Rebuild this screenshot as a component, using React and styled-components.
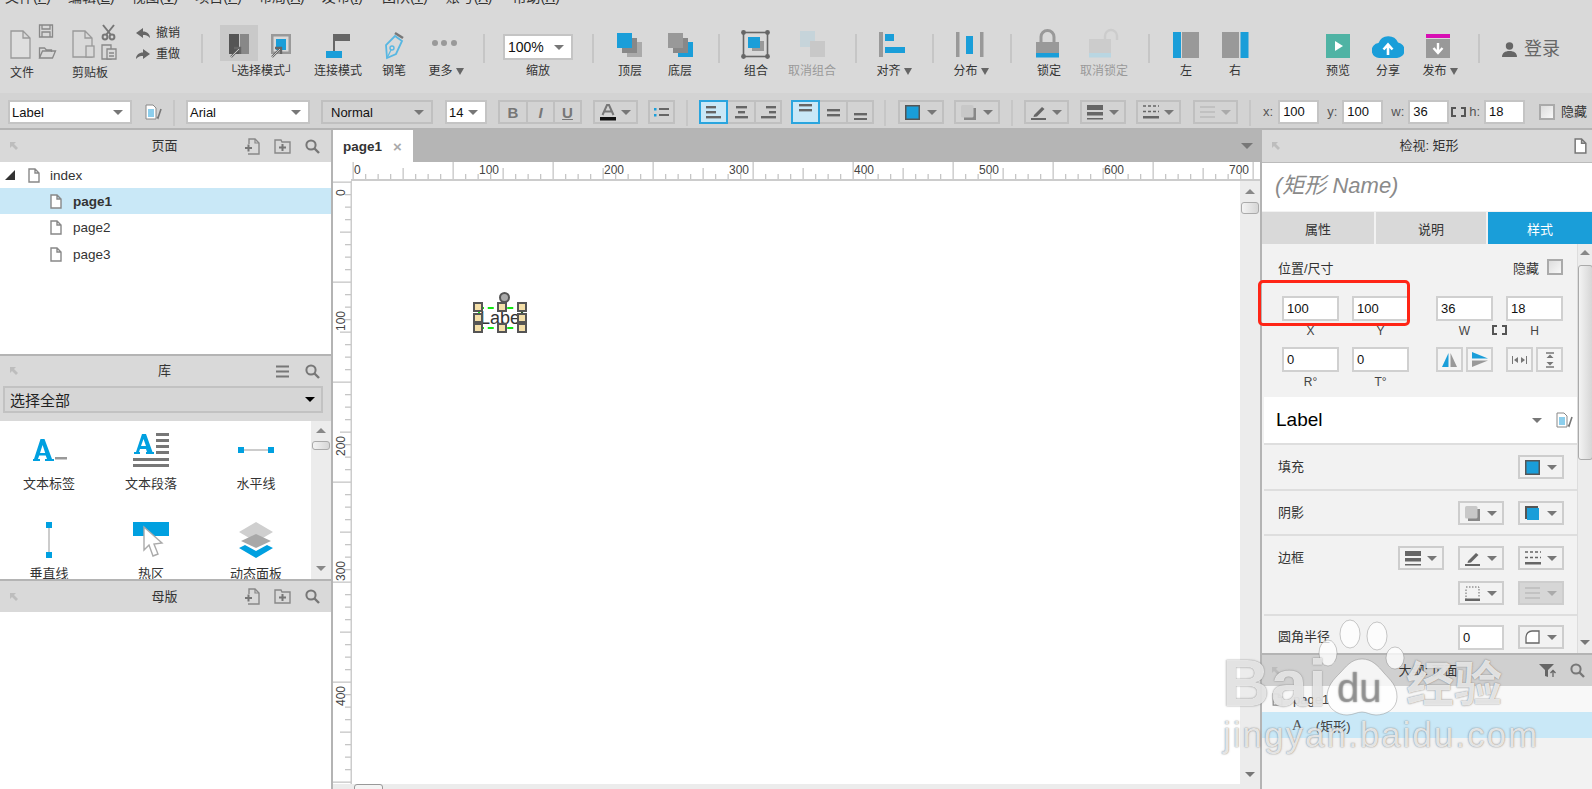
import React from 'react';
import styled, { createGlobalStyle, css } from 'styled-components';

const BLUE = '#1a9ed9';
const FONT = '"Liberation Sans","Noto Sans CJK SC",sans-serif';

const Global = createGlobalStyle`
  html, body { margin: 0; padding: 0; width: 1592px; height: 789px; overflow: hidden; background: #fff; }
  body { font-family: ${FONT}; color: #333; }
  * { box-sizing: border-box; }
  svg { display: block; flex: none; }
`;
const ml = css`margin-left: ${p => p.$ml || 0}px;`;

const Page = styled.div`width:1592px;height:789px;display:flex;flex-direction:column;position:relative;overflow:hidden;`;

/* menu */
const MenuBar = styled.div`height:6px;background:#d9d9d9;overflow:hidden;flex:none;`;
const MenuRow = styled.div`display:flex;margin-top:-12px;font-size:14px;line-height:19px;color:#333;`;
const MenuItem = styled.span`${ml};flex:none;white-space:nowrap;u{text-decoration:underline;}`;

/* toolbar */
const Toolbar = styled.div`height:87px;flex:none;background:#d9d9d9;display:flex;align-items:flex-start;`;
const Sep = styled.div`${ml};flex:none;width:2px;height:${p => p.$h || 29}px;margin-top:${p => p.$t ?? 28}px;background:#c6c6c6;`;
const ToolCol = styled.div`${ml};flex:none;width:${p => p.$w}px;display:flex;flex-direction:column;align-items:center;margin-top:22px;`;
const ToolLabel = styled.div`height:14px;line-height:14px;margin-top:4px;font-size:12px;white-space:nowrap;color:${p => p.$dim ? '#999' : '#333'};display:flex;align-items:center;gap:3px;`;
const Caret = styled.span`width:0;height:0;border-left:4px solid transparent;border-right:4px solid transparent;border-top:7px solid #666;`;
const FileGroup = styled.div`flex:none;width:${p => p.$w}px;padding-left:${p => p.$pl}px;margin-top:18px;`;
const FileLabel = styled.div`font-size:12px;line-height:14px;height:14px;margin-top:6px;color:#333;`;
const UndoGroup = styled.div`flex:none;width:69px;padding:20px 0 0 4px;display:flex;flex-direction:column;gap:7px;`;
const UndoRow = styled.div`display:flex;align-items:center;gap:6px;height:14px;font-size:12px;line-height:14px;color:#333;`;
const SelectGroup = styled.div`flex:none;width:113px;margin-top:19px;display:flex;flex-direction:column;`;
const SelectCells = styled.div`display:flex;padding-left:17px;`;
const SelectCell = styled.div`width:${p => p.$w}px;height:36px;padding-top:9px;display:flex;justify-content:center;background:${p => p.$on ? '#c9c9c9' : 'transparent'};`;
const SelectLabel = styled.div`height:14px;line-height:14px;margin-top:3px;padding-left:3px;font-size:12px;text-align:center;white-space:nowrap;color:#333;`;
const ZoomBlock = styled.div`${ml};flex:none;width:70px;margin-top:28px;display:flex;flex-direction:column;`;
const ZoomLabel = styled.div`height:14px;line-height:14px;margin-top:4px;font-size:12px;text-align:center;color:#333;`;
const Login = styled.div`${ml};flex:none;margin-top:31px;display:flex;align-items:center;gap:7px;font-size:18px;line-height:24px;color:#666;`;

/* format bar */
const FormatBar = styled.div`height:37px;flex:none;background:#d3d3d3;border-bottom:2px solid #b4b4b4;display:flex;align-items:flex-start;padding-top:7px;`;
const Select = styled.div`${ml};flex:none;width:${p => p.$w}px;height:${p => p.$h || 24}px;background:${p => p.$flat ? 'transparent' : '#fff'};border:2px solid ${p => p.$flat ? '#c0c0c0' : '#c4c4c4'};display:flex;align-items:center;justify-content:space-between;padding:0 7px 0 ${p => p.$pl ?? 2}px;font-size:${p => p.$fs || 13}px;color:#111;`;
const Arrow = styled.span`flex:none;width:0;height:0;border-left:${p => p.$s || 5}px solid transparent;border-right:${p => p.$s || 5}px solid transparent;border-top:${p => (p.$s || 5)}px solid ${p => p.$c || '#777'};`;
const IconWrap = styled.div`${ml};flex:none;height:24px;display:flex;align-items:center;`;
const BtnGroup = styled.div`${ml};flex:none;display:flex;`;
const SquareBtn = styled.div`flex:none;width:${p => p.$w}px;height:24px;margin-left:${p => p.$first ? 0 : -2}px;border:2px solid ${p => p.$on ? '#2aa5de' : '#c0c0c0'};background:${p => p.$on ? '#c9e8f7' : 'transparent'};position:relative;z-index:${p => p.$on ? 1 : 0};display:flex;align-items:center;justify-content:center;color:#777;font-size:15px;font-weight:${p => p.$b ? 700 : 400};font-style:${p => p.$i ? 'italic' : 'normal'};text-decoration:${p => p.$u ? 'underline' : 'none'};`;
const DropBtn = styled.div`${ml};flex:none;width:${p => p.$w || 46}px;height:24px;border:2px solid ${p => p.$light ? '#cdcdcd' : '#c0c0c0'};background:${p => p.$off ? '#d6d6d6' : 'transparent'};display:flex;align-items:center;justify-content:space-between;padding:0 5px;`;
const FieldLabel = styled.span`${ml};flex:none;font-size:13px;line-height:24px;color:#555;`;
const TinyInput = styled.div`${ml};flex:none;width:41px;height:24px;border:2px solid #c4c4c4;background:#fff;font-size:13px;line-height:20px;padding-left:3px;color:#111;`;
const Check = styled.span`${ml};flex:none;width:16px;height:16px;border:2px solid #aaa;background:linear-gradient(135deg,#ddd,#f8f8f8);`;
const HideText = styled.span`${ml};flex:none;font-size:13px;line-height:24px;color:#333;`;

/* main */
const Main = styled.div`flex:1;min-height:0;display:flex;`;
const Left = styled.aside`flex:none;width:333px;border-right:2px solid #b4b4b4;display:flex;flex-direction:column;background:#fff;`;
const PanelHead = styled.div`flex:none;height:${p => p.$h || 32}px;background:${p => p.$bg || '#d9d9d9'};${p => p.$top && 'border-top:2px solid #b4b4b4;'}display:grid;grid-template-columns:1fr auto 1fr;align-items:center;padding:0 ${p => p.$pr ?? 11}px 0 9px;`;
const HeadTitle = styled.div`font-size:13px;line-height:16px;color:#333;white-space:nowrap;`;
const HeadIcons = styled.div`display:flex;justify-content:flex-end;align-items:center;gap:${p => p.$g ?? 14}px;`;
const Tree = styled.div`height:192px;flex:none;`;
const TreeRow = styled.div`height:${p => p.$h || 26}px;display:flex;align-items:center;background:${p => p.$on ? '#c9e8f7' : 'transparent'};padding-left:${p => p.$pl}px;gap:${p => p.$g || 11}px;font-size:13.5px;font-weight:${p => p.$on ? 700 : 400};color:#333;`;
const Triangle = styled.span`width:0;height:0;border-left:10px solid transparent;border-bottom:10px solid #333;margin-right:3px;`;
const LibBar = styled.div`flex:none;height:35px;background:#d9d9d9;padding:0 8px 8px 3px;`;
const LibSelect = styled.div`height:27px;border:2px solid #c2c2c2;background:#d6d6d6;display:flex;align-items:center;justify-content:space-between;padding:0 6px 0 5px;font-size:15px;color:#222;`;
const LibBody = styled.div`height:158px;flex:none;display:flex;overflow:hidden;`;
const LibGrid = styled.div`flex:1;display:grid;grid-template-columns:98px 106px 104px;grid-auto-rows:90px;padding-top:11px;`;
const LibItem = styled.div`display:flex;flex-direction:column;align-items:center;`;
const LibIcon = styled.div`height:36px;display:flex;align-items:center;justify-content:center;`;
const LibText = styled.div`margin-top:8px;font-size:13px;line-height:16px;color:#333;white-space:nowrap;`;
const VScroll = styled.div`flex:none;width:${p => p.$w}px;background:#ececec;display:flex;flex-direction:column;align-items:center;padding:${p => p.$pt || 7}px 0 ${p => p.$pb || 8}px;border-left:${p => p.$bl ? '1px solid #ddd' : 'none'};`;
const UpArrow = styled.span`flex:none;width:0;height:0;border-left:5px solid transparent;border-right:5px solid transparent;border-bottom:5px solid #888;`;
const Thumb = styled.div`flex:none;width:${p => p.$w}px;height:${p => p.$h}px;margin-top:${p => p.$t}px;border:1px solid #aaa;border-radius:3px;background:linear-gradient(90deg,#f3f3f3,#d6d6d6);`;
const Spacer = styled.div`flex:1;`;

const Center = styled.section`flex:none;width:927px;display:flex;flex-direction:column;`;
const TabBar = styled.div`flex:none;height:32px;background:#b5b5b5;display:flex;justify-content:space-between;align-items:center;padding-right:7px;`;
const Tab = styled.div`width:80px;height:32px;background:#fff;display:flex;align-items:center;padding-left:10px;gap:11px;font-size:13.5px;font-weight:700;color:#333;`;
const CloseX = styled.span`font-size:15px;color:#aaa;font-weight:700;`;
const RulerTop = styled.div`flex:none;height:19px;display:flex;background:#fff;`;
const RulerCorner = styled.div`flex:none;width:18px;`;
const Work = styled.div`flex:1;min-height:0;display:flex;`;
const WorkMain = styled.div`flex:1;min-width:0;display:flex;flex-direction:column;`;
const WorkBody = styled.div`flex:1;min-height:0;display:flex;`;
const Canvas = styled.div`flex:1;position:relative;background:#fff;overflow:hidden;`;
const HScroll = styled.div`flex:none;height:5px;background:#ececec;overflow:hidden;padding-left:21px;`;
const HThumb = styled.div`width:29px;height:12px;border:1px solid #999;border-radius:3px;background:#f4f4f4;`;
const Selected = styled.div`position:absolute;left:126px;top:126px;width:45px;height:22px;border:2px dashed #12e812;font-size:18px;line-height:18px;text-align:center;color:#333;white-space:nowrap;`;
const Handle = styled.span`position:absolute;width:10px;height:10px;left:${p => p.$x}px;top:${p => p.$y}px;background:#f4dfa8;border:2px solid #555;`;
const RotHandle = styled.span`position:absolute;left:147px;top:111px;width:11px;height:11px;border-radius:50%;background:#aaa;border:2px solid #555;`;

/* right */
const Right = styled.aside`flex:1;min-width:0;display:flex;flex-direction:column;background:#f2f2f2;border-left:2px solid #b4b4b4;`;
const NameBox = styled.div`flex:none;height:49px;background:#fff;border-top:1px solid #bbb;padding-left:13px;font-size:22px;line-height:46px;font-style:italic;color:#8a8a8a;`;
const Tabs = styled.div`flex:none;height:33px;display:flex;gap:2px;background:#f2f2f2;padding-top:1px;`;
const TabBtn = styled.div`flex:${p => p.$w ? `none` : 1};width:${p => p.$w}px;background:${p => p.$on ? BLUE : '#d9d9d9'};color:${p => p.$on ? '#fff' : '#333'};display:flex;align-items:center;justify-content:center;font-size:13px;`;
const StyleArea = styled.div`flex:none;height:409px;display:flex;overflow:hidden;`;
const StyleBody = styled.div`flex:1;min-width:0;display:flex;flex-direction:column;`;
const PosHead = styled.div`display:flex;align-items:center;justify-content:space-between;padding:15px 14px 0 16px;height:31px;font-size:13px;color:#333;`;
const HideBox = styled.div`display:flex;align-items:center;gap:8px;`;
const PosGrid = styled.div`display:grid;grid-template-columns:57px 13px 57px 27px 57px 13px 57px;grid-template-rows:25px 26px 25px 22px;margin:21px 0 0 20px;`;
const PInput = styled.div`border:2px solid #d0d0d0;background:#fff;font-size:13px;line-height:21px;padding-left:3px;color:#111;`;
const PLabel = styled.div`font-size:12px;text-align:center;line-height:18px;padding-top:1px;color:#444;`;
const PGlyph = styled.div`display:flex;justify-content:center;padding-top:4px;width:13px;`;
const BtnPair = styled.div`display:flex;justify-content:space-between;`;
const IconBtn = styled.div`width:27px;height:25px;border:2px solid #d0d0d0;background:#f4f4f4;display:flex;align-items:center;justify-content:center;`;
const LabelRow = styled.div`flex:none;height:48px;margin:3px 0 0 2px;background:#fff;border-bottom:2px solid #dedede;display:flex;align-items:center;padding:0 4px 0 12px;font-size:19px;color:#000;`;
const LabelRight = styled.div`margin-left:auto;display:flex;align-items:center;gap:14px;`;
const PropRow = styled.div`flex:none;height:${p => p.$h}px;margin-left:2px;border-bottom:${p => p.$nb ? 'none' : '2px solid #dedede'};display:flex;padding:${p => p.$pt || 10}px 13px 0 14px;font-size:13px;color:#333;`;
const PropName = styled.div`line-height:24px;flex:none;`;
const PropCtl = styled.div`margin-left:auto;display:flex;flex-direction:column;align-items:flex-end;gap:11px;`;
const CtlRow = styled.div`display:flex;gap:14px;`;
const RadiusInput = styled.div`flex:none;width:46px;height:25px;border:2px solid #d0d0d0;background:#fff;font-size:13px;line-height:21px;padding-left:3px;color:#111;`;
const Outline = styled.div`flex:1;min-height:0;display:flex;flex-direction:column;`;
const OutRow = styled.div`flex:none;height:26px;display:flex;align-items:center;background:${p => p.$on ? '#c9e8f7' : '#f8f8f8'};padding-left:${p => p.$pl}px;gap:${p => p.$g}px;font-size:13px;color:#444;`;
const ASerif = styled.span`font-family:"Liberation Serif",serif;font-size:15px;color:#555;`;

/* overlays */
const RedBox = styled.div`position:absolute;left:1258px;top:280px;width:152px;height:46px;border:3px solid #ff2516;border-radius:5px;pointer-events:none;`;
const Mark = styled.div`position:absolute;left:0;top:0;width:1592px;height:789px;pointer-events:none;`;
const MarkText = styled.div`position:absolute;left:${p => p.$x}px;top:${p => p.$y}px;font-size:${p => p.$s}px;line-height:1;letter-spacing:${p => p.$ls || 0}px;font-weight:${p => p.$b ? 700 : 400};color:${p => p.$c || 'rgba(255,255,255,.78)'};text-shadow:0 0 1px rgba(90,90,90,.6),0 0 2px rgba(110,110,110,.5);white-space:nowrap;`;
const MarkSvg = styled.svg`position:absolute;left:1310px;top:615px;`;

/* ---------- drawings ---------- */
const Doc = ({ w = 12, h = 15, c = '#888', fill = '#fff' }) => (
  <svg width={w} height={h} viewBox="0 0 12 15"><path d="M1 1h6l4 4v9H1zM7 1v4h4" fill={fill} stroke={c} strokeWidth="1.4" /></svg>
);
const Cursor = ({ x, y }) => (
  <g transform={`translate(${x} ${y})`}><path d="M0 11L8 3M3 2h6v6" fill="none" stroke="#666" strokeWidth="2.4" /><path d="M0 11L8 3" stroke="#ddd" strokeWidth=".8" /></g>
);
const Up = () => <svg width="10" height="10" viewBox="0 0 10 10"><path d="M1 1h6L5 3l4 4-2 2-4-4-2 2z" fill="#bdbdbd" /></svg>;
const Search = () => <svg width="15" height="15" viewBox="0 0 15 15"><circle cx="6" cy="6" r="4.6" fill="none" stroke="#777" strokeWidth="2" /><path d="M9.5 9.5L14 14" stroke="#777" strokeWidth="2.4" /></svg>;
const AddPage = () => <svg width="15" height="17" viewBox="0 0 15 17"><path d="M4 6V1h6l4 4v11H3" fill="none" stroke="#888" strokeWidth="1.4" /><path d="M10 1v4h4" fill="none" stroke="#888" strokeWidth="1.2" /><path d="M0 10h7M3.5 6.5v7" stroke="#777" strokeWidth="2" /></svg>;
const AddFolder = () => <svg width="17" height="15" viewBox="0 0 17 15"><path d="M1 14V1h6l1 2h8v11z" fill="none" stroke="#888" strokeWidth="1.4" /><path d="M5 8.5h7M8.5 5v7" stroke="#777" strokeWidth="2" /></svg>;
const Lines = () => <svg width="13" height="13" viewBox="0 0 13 13"><path d="M0 1.5h13M0 6.5h13M0 11.5h13" stroke="#777" strokeWidth="2.2" /></svg>;
const SlotSvg = ({ children }) => <svg width="32" height="32" viewBox="0 0 32 32">{children}</svg>;
const StyleDoc = () => (
  <svg width="17" height="16" viewBox="0 0 17 16"><path d="M1 1h7l3 3v11H1z" fill="#fff" stroke="#888" /><path d="M3 6h6M3 8h6M3 10h6M3 12h6" stroke={BLUE} strokeWidth="1.2" /><path d="M16 5l-3 9-1-1" fill="none" stroke="#777" strokeWidth="1.6" /></svg>
);
const FileIcons = () => (
  <svg width="50" height="36" viewBox="0 0 50 36" fill="none" stroke="#999" strokeWidth="1.3">
    <path d="M1 7h12l7 7v20H1zM13 7v7h7" fill="#dedede" />
    <path d="M29.5 1h13v12h-13z" stroke="#888" /><path d="M32 1v4h8V1M32 13V8h8v5" stroke="#888" />
    <path d="M29.5 34V24h5l2 2h5v2M29.5 34l3-7h13l-3 7z" stroke="#888" />
  </svg>
);
const ClipIcons = () => (
  <svg width="46" height="36" viewBox="0 0 46 36" fill="none" stroke="#999" strokeWidth="1.3">
    <path d="M1 7h12l7 7v19H1zM13 7v7h7" />
    <rect x="14" y="22" width="8" height="11" fill="#d9d9d9" />
    <g stroke="#777" strokeWidth="2"><path d="M31 1l8 10M42 1l-8 10" /><circle cx="33" cy="13" r="2.4" /><circle cx="40" cy="13" r="2.4" /></g>
    <path d="M30 21h9v14h-9z" stroke="#888" /><path d="M35 25h9v10H35z" fill="#d9d9d9" stroke="#888" /><path d="M37 29h5M37 32h5" stroke="#888" />
  </svg>
);
const UndoI = ({ flip }) => (
  <svg width="14" height="11" viewBox="0 0 14 11"><g transform={flip ? 'translate(14 0) scale(-1 1)' : undefined}><path d="M7 0L0 5l7 5V7c2.500 0 5 .5 7 3 0-4-3-6.500-7-6.500z" fill="#666" /></g></svg>
);
const ModeA = () => <svg width="20" height="24" viewBox="0 0 20 24"><rect width="10" height="20" fill="#555" /><rect x="11" width="9" height="20" fill="#888" /><Cursor x={2} y={12} /></svg>;
const ModeB = () => <svg width="20" height="24" viewBox="0 0 20 24"><rect width="20" height="20" fill="#999" /><rect x="2.500" y="2.500" width="15" height="15" fill="#d9d9d9" /><rect x="5" y="5" width="10" height="11" fill={BLUE} /><Cursor x={1} y={12} /></svg>;
const Connect = () => <SlotSvg><rect x="11" y="6" width="17" height="7" fill="#666" /><path d="M12 10v13" stroke="#666" strokeWidth="2" /><rect x="4" y="23" width="16" height="7" fill={BLUE} /></SlotSvg>;
const Pen = () => <SlotSvg><g fill="none"><path d="M9 30L8 17l9-9 7 5-6 13z" stroke="#58b7e2" strokeWidth="1.8" /><circle cx="14" cy="20" r="2" stroke="#58b7e2" strokeWidth="1.4" /><path d="M9 30l4-8" stroke="#58b7e2" strokeWidth="1.3" /><path d="M17 5l8 5" stroke="#777" strokeWidth="2.6" /></g></SlotSvg>;
const More = () => <SlotSvg><g fill="#999"><circle cx="5" cy="15" r="3" /><circle cx="14" cy="15" r="3" /><circle cx="24" cy="15" r="3" /></g></SlotSvg>;
const TopLayer = () => <SlotSvg><rect x="13" y="14" width="15" height="15" fill="#aaa" /><rect x="8" y="10" width="15" height="15" fill="#888" /><rect x="3" y="5" width="15" height="15" fill={BLUE} /></SlotSvg>;
const BottomLayer = () => <SlotSvg><rect x="14" y="14" width="15" height="15" fill={BLUE} /><rect x="9" y="10" width="15" height="15" fill="#888" /><rect x="4" y="5" width="15" height="15" fill="#999" /></SlotSvg>;
const GroupI = () => <SlotSvg><rect x="3.500" y="4.500" width="24" height="24" fill="none" stroke="#666" strokeWidth="1.6" /><rect x="12" y="13" width="12" height="10" fill="#999" /><rect x="8" y="9" width="12" height="11" fill={BLUE} /><g fill="#666"><circle cx="3.500" cy="4.500" r="2.400" /><circle cx="27.500" cy="4.500" r="2.400" /><circle cx="3.500" cy="28.500" r="2.400" /><circle cx="27.500" cy="28.500" r="2.400" /></g></SlotSvg>;
const Ungroup = () => <SlotSvg><rect x="4" y="3" width="15" height="16" fill="#c6d4da" /><rect x="14" y="13" width="15" height="16" fill="#c8c8c8" /></SlotSvg>;
const AlignI = () => <SlotSvg><rect x="1" y="4" width="4" height="25" fill="#999" /><rect x="7" y="6" width="9" height="7" fill={BLUE} /><rect x="7" y="19" width="20" height="6" fill={BLUE} /></SlotSvg>;
const Distribute = () => <SlotSvg><rect x="1" y="4" width="3.500" height="25" fill="#999" /><rect x="25" y="4" width="3.500" height="25" fill="#999" /><rect x="11" y="8" width="7" height="18" fill={BLUE} /></SlotSvg>;
const Lock = () => <SlotSvg><path d="M8 14V9a6.500 6.500 0 0 1 13 0v5" fill="none" stroke="#999" strokeWidth="3" /><rect x="3" y="14" width="23" height="11" fill="#999" /><rect x="3" y="25" width="23" height="4.500" fill={BLUE} /></SlotSvg>;
const Unlock = () => <SlotSvg><path d="M17 11V8a6 6 0 0 1 12 0v4" fill="none" stroke="#ccc" strokeWidth="2.400" /><rect x="1" y="11" width="22" height="14" fill="#ccc" /><rect x="1" y="25" width="22" height="4.500" fill="#b9d6e2" /></SlotSvg>;
const LeftI = () => <SlotSvg><rect x="3" y="4" width="8" height="26" fill={BLUE} /><rect x="12" y="4" width="17" height="26" fill="#999" /></SlotSvg>;
const RightI = () => <SlotSvg><rect x="3" y="4" width="17" height="26" fill="#999" /><rect x="21.500" y="4" width="8" height="26" fill={BLUE} /></SlotSvg>;
const Preview = () => <SlotSvg><rect x="4" y="6" width="24" height="24" fill="#4fb3a4" /><path d="M13 13l8 5-8 5z" fill="#fff" /></SlotSvg>;
const Share = () => <SlotSvg><path d="M8 30a7.500 7.500 0 0 1-1.500-15A10.500 10.500 0 0 1 26 14.500 7.800 7.800 0 0 1 25 30z" fill={BLUE} /><path d="M16 27v-9M11.500 21.500l4.500-5 4.500 5" fill="none" stroke="#fff" strokeWidth="2.600" /></SlotSvg>;
const Publish = () => <SlotSvg><rect x="2" y="6" width="24" height="4" fill="#d80fb4" /><rect x="2" y="11" width="24" height="19" fill="#999" /><path d="M14 15v9M9.500 20l4.500 5 4.500-5" fill="none" stroke="#fff" strokeWidth="2.400" /></SlotSvg>;
const User = () => <svg width="15" height="15" viewBox="0 0 15 15"><circle cx="7.500" cy="4" r="3.700" fill="#666" /><path d="M0 15c0-4 3-6 7.500-6s7.500 2 7.500 6z" fill="#666" /></svg>;

const AlignText = ({ k }) => {
  const rows = k === 0 ? [[0, 10], [0, 10], [0, 15]] : k === 1 ? [[2, 11], [4, 7], [1, 13]] : [[5, 10], [8, 7], [0, 15]];
  return <svg width="15" height="13" viewBox="0 0 15 13">{rows.map((r, i) => <rect key={i} x={r[0]} y={i * 5} width={r[1]} height="2.400" fill="#666" />)}</svg>;
};
const VAlign = ({ k }) => {
  const y = k === 0 ? 0 : k === 1 ? 5 : 9;
  return <svg width="13" height="16" viewBox="0 0 13 16"><rect y={y} width="13" height="2.400" fill="#666" /><rect y={y + 5} width="13" height="2.400" fill="#666" /></svg>;
};
const ListI = () => <svg width="15" height="10" viewBox="0 0 15 10"><rect y="1" width="2.500" height="2.500" fill={BLUE} /><rect y="7" width="2.500" height="2.500" fill={BLUE} /><rect x="5" y="1" width="10" height="2" fill="#666" /><rect x="5" y="7" width="10" height="2" fill="#666" /></svg>;
const ColorA = () => <svg width="16" height="17" viewBox="0 0 16 17"><path d="M2.500 11L7 1h2l4.500 10M4.500 7.500h7" fill="none" stroke="#777" strokeWidth="2" /><rect y="13" width="16" height="3.500" fill="#111" /></svg>;
const Fill = () => <svg width="15" height="15" viewBox="0 0 15 15"><rect x=".75" y=".75" width="13.500" height="13.500" fill={BLUE} stroke="#555" strokeWidth="1.500" /></svg>;
const Shadow = () => <svg width="15" height="15" viewBox="0 0 15 15"><rect x="3" y="3" width="12" height="12" fill="#888" /><rect width="12.500" height="12.500" rx="1.500" fill="#c8c8c8" /></svg>;
const ShadowFill = () => <svg width="14" height="14" viewBox="0 0 14 14"><rect width="13" height="13" fill="#555" /><rect x="2" y="2" width="12" height="12" fill={BLUE} /></svg>;
const PenLine = () => <svg width="16" height="15" viewBox="0 0 16 15"><path d="M3 10L11 2l2.500 2L6 11.500 2.500 12z" fill="#666" /><rect y="13" width="15" height="2" fill="#666" /></svg>;
const Thick = () => <svg width="16" height="15" viewBox="0 0 16 15"><rect width="16" height="5" fill="#666" /><rect y="7" width="16" height="3.500" fill="#666" /><rect y="13" width="16" height="1.500" fill="#666" /></svg>;
const Dash = () => <svg width="16" height="14" viewBox="0 0 16 14"><path d="M0 1h16M0 6.500h16" stroke="#666" strokeWidth="1.600" strokeDasharray="3 2" /><rect y="11" width="16" height="2.500" fill="#666" /></svg>;
const ArrowsI = () => <svg width="15" height="14" viewBox="0 0 15 14"><path d="M0 2h15M0 7h15M0 12h15" stroke="#bcbcbc" strokeWidth="1.300" /></svg>;
const Corner = () => <svg width="15" height="15" viewBox="0 0 15 15"><path d="M1 14V3" stroke="#666" strokeDasharray="1.500 1.500" /><path d="M1 1h13v10" fill="none" stroke="#666" strokeDasharray="1.500 1.500" /><rect y="12.500" width="15" height="2.500" fill="#666" /></svg>;
const RadiusI = () => <svg width="15" height="14" viewBox="0 0 15 14"><path d="M1 13V7a6 6 0 0 1 6-6h7v12z" fill="#fff" stroke="#666" strokeWidth="1.300" /></svg>;
const Bracket = () => <svg width="15" height="10" viewBox="0 0 15 10" fill="none" stroke="#555" strokeWidth="2"><path d="M5 1H1v8h4M10 1h4v8h-4" /></svg>;
const FlipV = () => <svg width="15" height="16" viewBox="0 0 15 16"><path d="M6.500 1v14H0z" fill={BLUE} /><path d="M8.500 1v14H15z" fill="#999" /></svg>;
const FlipH = () => <svg width="16" height="15" viewBox="0 0 16 15"><path d="M0 0l16 6.500H0z" fill={BLUE} /><path d="M0 15l16-6.500H0z" fill="#999" /></svg>;
const DistH = () => <svg width="15" height="8" viewBox="0 0 15 8"><path d="M.5 0v8M14.500 0v8" stroke="#777" /><path d="M2 4l4-3v6zM13 4L9 1v6z" fill="#777" /></svg>;
const DistV = () => <svg width="10" height="16" viewBox="0 0 10 16"><path d="M1 1h8M1 15h8" stroke="#777" strokeWidth="1.300" /><path d="M5 2.500L1.500 6h7zM5 13.500L1.500 10h7z" fill="#777" /></svg>;
const Filter = () => <svg width="17" height="14" viewBox="0 0 17 14"><path d="M0 0h15l-6 6v7l-3-1V6z" fill="#666" /><path d="M14 13V7M11.500 9L14 6.500 16.500 9" fill="none" stroke="#666" strokeWidth="1.300" /></svg>;

const LibLabelI = () => <svg width="36" height="24" viewBox="0 0 36 24"><path d="M2 23h7v-2H7l1.200-3.500h6.500L16 21h-2v2h9v-2h-2L13.500 1h-4L3 21H2zM9 15l2.600-8 2.600 8z" fill="#00a0e0" /><rect x="24" y="19" width="12" height="2.500" fill="#999" /></svg>;
const LibParaI = () => <svg width="36" height="34" viewBox="0 0 36 34"><path d="M1 21h6v-2H6l1-3h6l1 3h-1v2h8v-2h-1.500L13 1H9L3 19H1zM8 13l2.500-7L13 13z" fill="#00a0e0" /><g fill="#777"><rect x="23" y="0" width="13" height="3" /><rect x="23" y="6" width="13" height="3" /><rect x="23" y="12" width="13" height="3" /><rect x="23" y="18" width="13" height="3" /><rect y="25" width="36" height="3" /><rect y="31" width="36" height="3" /></g></svg>;
const LibHLine = () => <svg width="36" height="8" viewBox="0 0 36 8"><path d="M4 4h28" stroke="#bbb" strokeWidth="1.500" /><rect y="1" width="6" height="6" fill="#00a0e0" /><rect x="30" y="1" width="6" height="6" fill="#00a0e0" /></svg>;
const LibVLine = () => <svg width="8" height="36" viewBox="0 0 8 36"><path d="M4 4v28" stroke="#bbb" strokeWidth="1.500" /><rect x="1" width="6" height="6" fill="#00a0e0" /><rect x="1" y="30" width="6" height="6" fill="#00a0e0" /></svg>;
const LibHot = () => <svg width="36" height="36" viewBox="0 0 36 36"><rect width="36" height="14" fill="#00a0e0" /><path d="M11 5v23l5-5 4 11 5-2-4-10 8-1z" fill="#fff" stroke="#aaa" strokeWidth="1.400" /></svg>;
const LibLayer = () => <svg width="36" height="36" viewBox="0 0 36 36"><path d="M18 0l17 10-17 10L1 10z" fill="#cfcfcf" /><path d="M18 12l15 7-15 7-15-7z" fill="#a8a8a8" /><path d="M7 23l11 6 11-6 6 3-17 10L1 26z" fill="#00a0e0" /></svg>;

/* rulers */
const rulerTicks = (n) => Array.from({ length: n }, (_, i) => i);
const HRuler = () => (
  <svg width="909" height="19" viewBox="0 0 909 19">
    <rect y="17" width="909" height="2" fill="#ccc" />
    {rulerTicks(73).map(i => {
      const x = 1.5 + i * 12.5;
      const h = i % 8 === 0 ? 17 : i % 4 === 0 ? 11 : 5;
      return <rect key={i} x={x} y={17 - h} width="1.300" height={h} fill="#c6c6c6" />;
    })}
    {rulerTicks(8).map(i => <text key={i} x={3 + i * 125} y={12} fontSize="12" fontFamily="Liberation Sans" fill="#444">{i * 100}</text>)}
  </svg>
);
const VRuler = () => (
  <svg width="19" height="608" viewBox="0 0 19 608">
    <rect x="17.500" width="1.500" height="608" fill="#ccc" />
    {rulerTicks(49).map(i => {
      const y = 0.5 + i * 12.5;
      const h = i % 8 === 0 ? 18 : i % 4 === 0 ? 11 : 6;
      return <rect key={i} x={18 - h} y={y} width={h} height="1.300" fill="#c6c6c6" />;
    })}
    {rulerTicks(5).map(i => {
      const y = i === 0 ? 15 : 26 + i * 125 - 1;
      return <text key={i} transform={`translate(12 ${y}) rotate(-90)`} fontSize="12" fontFamily="Liberation Sans" fill="#444">{i * 100}</text>;
    })}
  </svg>
);

/* data */
const menus = [['文件(', 'F', 5], ['编辑(', 'E', 17], ['视图(', 'V', 17], ['项目(', 'P', 17], ['布局(', 'A', 16], ['发布(', 'I', 17], ['团队(', 'T', 19], ['账号(', 'A', 18], ['帮助(', 'H', 20]];
const Tool = ({ I, label, w, m, dim, caret }) => (
  <ToolCol $w={w} $ml={m}><I /><ToolLabel $dim={dim}>{label}{caret && <Caret />}</ToolLabel></ToolCol>
);
const libs = [[LibLabelI, '文本标签'], [LibParaI, '文本段落'], [LibHLine, '水平线'], [LibVLine, '垂直线'], [LibHot, '热区'], [LibLayer, '动态面板']];
const handles = [[-7, -7], [17, -7], [37, -7], [-7, 4], [37, 4], [17, 14], [-7, 14], [37, 14]];

export default function App() {
  return (
    <Page>
      <Global />
      <MenuBar>
        <MenuRow>
          {menus.map(m => <MenuItem key={m[0]} $ml={m[2]}>{m[0]}<u>{m[1]}</u>)</MenuItem>)}
        </MenuRow>
      </MenuBar>
      <Toolbar>
        <FileGroup $w={66} $pl={10}><FileIcons /><FileLabel>文件</FileLabel></FileGroup>
        <FileGroup $w={66} $pl={6}><ClipIcons /><FileLabel>剪贴板</FileLabel></FileGroup>
        <UndoGroup>
          <UndoRow><UndoI />撤销</UndoRow>
          <UndoRow><UndoI flip />重做</UndoRow>
        </UndoGroup>
        <Sep />
        <SelectGroup>
          <SelectCells>
            <SelectCell $w={38} $on><ModeA /></SelectCell>
            <SelectCell $w={45}><ModeB /></SelectCell>
          </SelectCells>
          <SelectLabel>└选择模式┘</SelectLabel>
        </SelectGroup>
        <Tool I={Connect} label="连接模式" w={44} />
        <Tool I={Pen} label="钢笔" w={44} m={12} />
        <Tool I={More} label="更多" w={44} m={8} caret />
        <Sep $ml={15} />
        <ZoomBlock $ml={18}>
          <Select $w={70} $h={26} $pl={3} $fs={14}>100%<Arrow /></Select>
          <ZoomLabel>缩放</ZoomLabel>
        </ZoomBlock>
        <Sep $ml={19} />
        <Tool I={TopLayer} label="顶层" w={48} m={12} />
        <Tool I={BottomLayer} label="底层" w={48} m={2} />
        <Sep $ml={14} />
        <Tool I={GroupI} label="组合" w={48} m={12} />
        <Tool I={Ungroup} label="取消组合" w={62} m={1} dim />
        <Sep $ml={12} />
        <Tool I={AlignI} label="对齐" w={48} m={13} caret />
        <Sep $ml={14} />
        <Tool I={Distribute} label="分布" w={48} m={13} caret />
        <Sep $ml={15} />
        <Tool I={Lock} label="锁定" w={48} m={13} />
        <Tool I={Unlock} label="取消锁定" w={62} dim />
        <Sep $ml={13} />
        <Tool I={LeftI} label="左" w={48} m={12} />
        <Tool I={RightI} label="右" w={48} m={1} />
        <Tool I={Preview} label="预览" w={48} m={55} />
        <Tool I={Share} label="分享" w={48} m={2} />
        <Tool I={Publish} label="发布" w={48} m={4} caret />
        <Sep $ml={14} />
        <Login $ml={22}><User />登录</Login>
      </Toolbar>
      <FormatBar>
        <Select $w={124} $ml={8}>Label<Arrow /></Select>
        <IconWrap $ml={13}><StyleDoc /></IconWrap>
        <Sep $ml={11} $h={26} $t={0} />
        <Select $w={124} $ml={11}>Arial<Arrow /></Select>
        <Select $w={112} $ml={11} $flat $pl={8}>Normal<Arrow /></Select>
        <Select $w={42} $ml={12}>14<Arrow /></Select>
        <BtnGroup $ml={11}>
          <SquareBtn $w={30} $first $b>B</SquareBtn>
          <SquareBtn $w={29} $i $b>I</SquareBtn>
          <SquareBtn $w={29} $u $b>U</SquareBtn>
        </BtnGroup>
        <DropBtn $w={45} $ml={11}><ColorA /><Arrow /></DropBtn>
        <BtnGroup $ml={10}><SquareBtn $w={27} $first><ListI /></SquareBtn></BtnGroup>
        <Sep $ml={11} $h={26} $t={0} />
        <BtnGroup $ml={11}>
          <SquareBtn $w={29} $first $on><AlignText k={0} /></SquareBtn>
          <SquareBtn $w={30}><AlignText k={1} /></SquareBtn>
          <SquareBtn $w={28}><AlignText k={2} /></SquareBtn>
        </BtnGroup>
        <BtnGroup $ml={9}>
          <SquareBtn $w={29} $first $on><VAlign k={0} /></SquareBtn>
          <SquareBtn $w={30}><VAlign k={1} /></SquareBtn>
          <SquareBtn $w={28}><VAlign k={2} /></SquareBtn>
        </BtnGroup>
        <Sep $ml={10} $h={26} $t={0} />
        <DropBtn $ml={12}><Fill /><Arrow /></DropBtn>
        <DropBtn $ml={10}><Shadow /><Arrow /></DropBtn>
        <Sep $ml={11} $h={26} $t={0} />
        <DropBtn $ml={11} $w={45}><PenLine /><Arrow /></DropBtn>
        <DropBtn $ml={11}><Thick /><Arrow /></DropBtn>
        <DropBtn $ml={10} $w={45}><Dash /><Arrow /></DropBtn>
        <DropBtn $ml={12} $w={45}><ArrowsI /><Arrow $c="#aaa" /></DropBtn>
        <Sep $ml={11} $h={26} $t={0} />
        <FieldLabel $ml={12}>x:</FieldLabel>
        <TinyInput $ml={5}>100</TinyInput>
        <FieldLabel $ml={8}>y:</FieldLabel>
        <TinyInput $ml={5}>100</TinyInput>
        <FieldLabel $ml={8}>w:</FieldLabel>
        <TinyInput $ml={4}>36</TinyInput>
        <IconWrap $ml={2}><Bracket /></IconWrap>
        <FieldLabel $ml={3}>h:</FieldLabel>
        <TinyInput $ml={4}>18</TinyInput>
        <IconWrap $ml={14}><Check /></IconWrap>
        <HideText $ml={6}>隐藏</HideText>
      </FormatBar>
      <Main>
        <Left>
          <PanelHead>
            <Up /><HeadTitle>页面</HeadTitle>
            <HeadIcons><AddPage /><AddFolder /><Search /></HeadIcons>
          </PanelHead>
          <Tree>
            <TreeRow $pl={5} $g={10}><Triangle /><Doc />index</TreeRow>
            <TreeRow $pl={50} $on><Doc />page1</TreeRow>
            <TreeRow $pl={50} $h={27}><Doc />page2</TreeRow>
            <TreeRow $pl={50}><Doc />page3</TreeRow>
          </Tree>
          <PanelHead $top>
            <Up /><HeadTitle>库</HeadTitle>
            <HeadIcons $g={16}><Lines /><Search /></HeadIcons>
          </PanelHead>
          <LibBar><LibSelect>选择全部<Arrow $c="#000" $s={5} /></LibSelect></LibBar>
          <LibBody>
            <LibGrid>
              {libs.map(([I, t]) => <LibItem key={t}><LibIcon><I /></LibIcon><LibText>{t}</LibText></LibItem>)}
            </LibGrid>
            <VScroll $w={20}>
              <UpArrow /><Thumb $w={18} $h={9} $t={8} /><Spacer /><Arrow $c="#888" />
            </VScroll>
          </LibBody>
          <PanelHead $top $h={33}>
            <Up /><HeadTitle>母版</HeadTitle>
            <HeadIcons><AddPage /><AddFolder /><Search /></HeadIcons>
          </PanelHead>
        </Left>
        <Center>
          <TabBar>
            <Tab>page1<CloseX>×</CloseX></Tab>
            <Arrow $c="#777" $s={6} />
          </TabBar>
          <RulerTop>
            <RulerCorner />
            <HRuler />
          </RulerTop>
          <Work>
            <WorkMain>
              <WorkBody>
                <VRuler />
                <Canvas>
                  <RotHandle />
                  <Selected>
                    Label
                    {handles.map(h => <Handle key={h.join()} $x={h[0]} $y={h[1]} />)}
                  </Selected>
                </Canvas>
              </WorkBody>
              <HScroll><HThumb /></HScroll>
            </WorkMain>
            <VScroll $w={20} $pt={8} $pb={12}>
              <UpArrow /><Thumb $w={18} $h={12} $t={8} /><Spacer /><Arrow $c="#777" />
            </VScroll>
          </Work>
        </Center>
        <Right>
          <PanelHead $pr={5}>
            <Up /><HeadTitle>检视: 矩形</HeadTitle>
            <HeadIcons><Doc w={13} h={16} c="#777" /></HeadIcons>
          </PanelHead>
          <NameBox>(矩形 Name)</NameBox>
          <Tabs>
            <TabBtn $w={112}>属性</TabBtn>
            <TabBtn $w={110}>说明</TabBtn>
            <TabBtn $on>样式</TabBtn>
          </Tabs>
          <StyleArea>
            <StyleBody>
              <PosHead>位置/尺寸<HideBox>隐藏<Check /></HideBox></PosHead>
              <PosGrid>
                <PInput>100</PInput><span /><PInput>100</PInput><span /><PInput>36</PInput><span /><PInput>18</PInput>
                <PLabel>X</PLabel><span /><PLabel>Y</PLabel><span /><PLabel>W</PLabel><PGlyph><Bracket /></PGlyph><PLabel>H</PLabel>
                <PInput>0</PInput><span /><PInput>0</PInput><span />
                <BtnPair><IconBtn><FlipV /></IconBtn><IconBtn><FlipH /></IconBtn></BtnPair><span />
                <BtnPair><IconBtn><DistH /></IconBtn><IconBtn><DistV /></IconBtn></BtnPair>
                <PLabel>R°</PLabel><span /><PLabel>T°</PLabel>
              </PosGrid>
              <LabelRow>Label<LabelRight><Arrow /><StyleDoc /></LabelRight></LabelRow>
              <PropRow $h={46}><PropName>填充</PropName><PropCtl><DropBtn $light><Fill /><Arrow /></DropBtn></PropCtl></PropRow>
              <PropRow $h={45}><PropName>阴影</PropName><PropCtl><CtlRow><DropBtn $light><Shadow /><Arrow /></DropBtn><DropBtn $light><ShadowFill /><Arrow /></DropBtn></CtlRow></PropCtl></PropRow>
              <PropRow $h={80}>
                <PropName>边框</PropName>
                <PropCtl>
                  <CtlRow><DropBtn $light><Thick /><Arrow /></DropBtn><DropBtn $light><PenLine /><Arrow /></DropBtn><DropBtn $light><Dash /><Arrow /></DropBtn></CtlRow>
                  <CtlRow><DropBtn $light><Corner /><Arrow /></DropBtn><DropBtn $light $off><ArrowsI /><Arrow $c="#aaa" /></DropBtn></CtlRow>
                </PropCtl>
              </PropRow>
              <PropRow $h={39} $nb $pt={9}><PropName>圆角半径</PropName><PropCtl><CtlRow><RadiusInput>0</RadiusInput><DropBtn $light><RadiusI /><Arrow /></DropBtn></CtlRow></PropCtl></PropRow>
            </StyleBody>
            <VScroll $w={15} $bl $pt={6} $pb={8}>
              <UpArrow /><Thumb $w={15} $h={195} $t={10} /><Spacer /><Arrow $c="#777" />
            </VScroll>
          </StyleArea>
          <Outline>
            <PanelHead $top $h={33} $bg="#d0d0d0" $pr={7}>
              <Up /><HeadTitle>大纲: 页面</HeadTitle>
              <HeadIcons><Filter /><Search /></HeadIcons>
            </PanelHead>
            <OutRow $pl={10} $g={10}><Doc w={11} h={13} />page1</OutRow>
            <OutRow $pl={30} $g={13} $on><ASerif>A</ASerif>(矩形)</OutRow>
          </Outline>
        </Right>
      </Main>
      <RedBox />
      <Mark>
        <MarkSvg width="110" height="110" viewBox="0 0 110 110" fill="rgba(255,255,255,.78)" stroke="rgba(120,120,120,.4)">
          <ellipse cx="40" cy="19" rx="10" ry="14" />
          <ellipse cx="67" cy="21" rx="10" ry="14" />
          <ellipse cx="18" cy="38" rx="9" ry="13" />
          <ellipse cx="85" cy="43" rx="9" ry="11" />
          <path d="M52 44c10 0 16 7 22 14s13 12 13 24-11 18-21 18c-6 0-9-3-14-3s-9 3-15 3c-10 0-20-7-20-18s7-18 13-24 11-14 22-14z" />
        </MarkSvg>
        <MarkText $x={1222} $y={650} $s={66} $b $ls={1}>Bai</MarkText>
        <MarkText $x={1337} $y={668} $s={40} $c="rgba(170,170,170,.4)">du</MarkText>
        <MarkText $x={1406} $y={661} $s={48} $b>经验</MarkText>
        <MarkText $x={1223} $y={717} $s={35} $ls={2}>jingyan.baidu.com</MarkText>
      </Mark>
    </Page>
  );
}
